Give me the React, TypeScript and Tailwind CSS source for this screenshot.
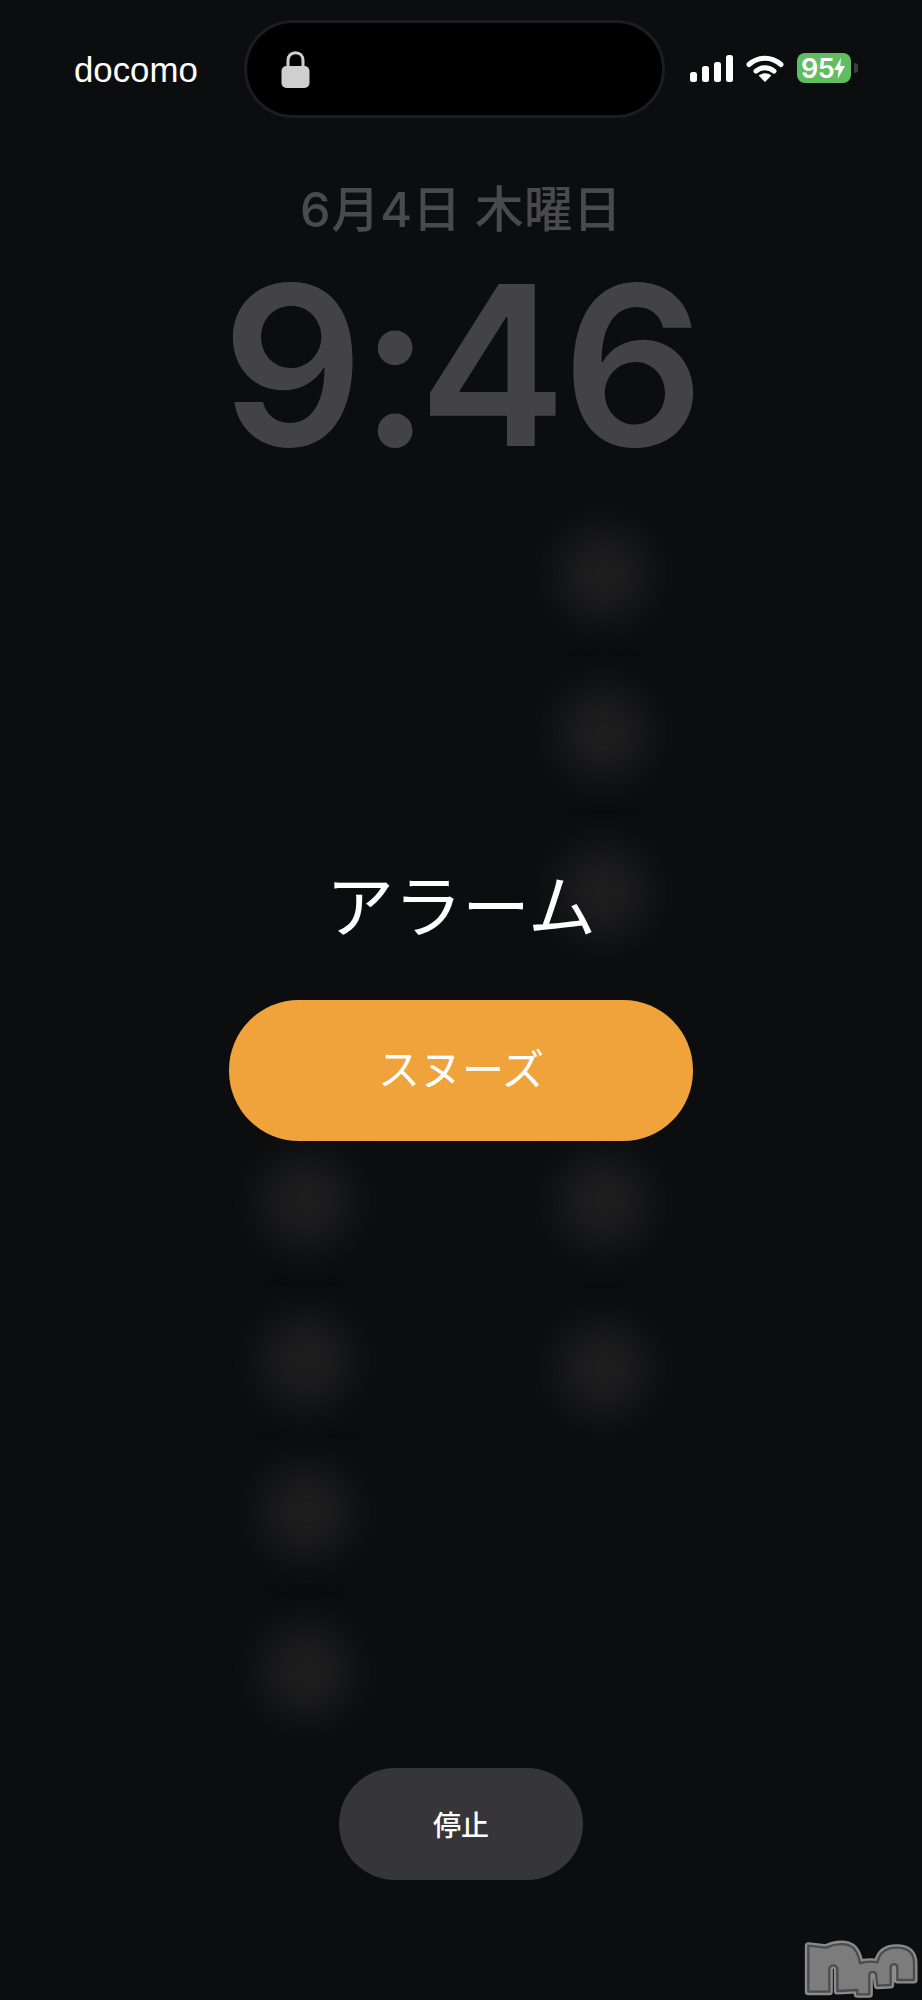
const cjk = { fontFamily: '"Noto Sans CJK JP", sans-serif' };

function Ghost({ on = true, extra = "" }: { on?: boolean; extra?: string }) {
  if (!on) return <div className="h-[90px] w-[90px]" />;
  return <div className={`h-[90px] w-[90px] rounded-full bg-[#1e1e1f] blur-[18px] ${extra}`} />;
}

function Signal() {
  return (
    <svg width="44" height="28" viewBox="0 0 44 28" className="block" aria-hidden="true">
      <rect x="1" y="17" width="7" height="10" rx="2.5" fill="#fff" />
      <rect x="13" y="11" width="7" height="16" rx="2.5" fill="#fff" />
      <rect x="25" y="7" width="7" height="20" rx="2.5" fill="#fff" />
      <rect x="37" y="0" width="7" height="27" rx="2.5" fill="#fff" />
    </svg>
  );
}

function Wifi() {
  return (
    <svg width="38" height="27" viewBox="0 0 38 27" className="block" aria-hidden="true">
      <path d="M3 9.5C12.5 1.2 25.5 1.2 35 9.5" fill="none" stroke="#fff" strokeWidth="5" strokeLinecap="round" />
      <path d="M10 16.2C15.4 11.6 22.6 11.6 28 16.2" fill="none" stroke="#fff" strokeWidth="5" strokeLinecap="round" />
      <path d="M19 27L12.6 20.6C16.4 17.6 21.6 17.6 25.4 20.6Z" fill="#fff" />
    </svg>
  );
}

function Lock() {
  return (
    <svg width="29" height="37" viewBox="0 0 29 37" className="block" aria-hidden="true">
      <path d="M7 17V9.5C7 4.8 10 1.8 14.5 1.8S22 4.8 22 9.5V17" fill="none" stroke="#cfcfcf" strokeWidth="3" />
      <rect x="0.5" y="15" width="28" height="22" rx="5" fill="#cfcfcf" />
    </svg>
  );
}

function Watermark() {
  const d =
    "M25 32L78 38C95 30 120 24 145 30C165 36 175 55 180 85C195 78 225 80 232 82C238 55 255 38 290 38C325 38 342 55 342 85L342 135L292 135L292 95C288 85 276 85 272 95L272 150L232 152L228 118C224 108 212 108 208 118L208 178L172 178L172 165L112 168L112 100C108 88 92 88 88 100L88 170L25 170Z";
  return (
    <svg width="122" height="65" viewBox="0 0 366 195" className="block" aria-hidden="true">
      <path d={d} fill="#7c7c7c" stroke="#8c8c8c" strokeWidth="21" strokeLinejoin="round" />
      <path d={d} fill="#7c7c7c" stroke="#4c4c4c" strokeWidth="7" strokeLinejoin="round" />
    </svg>
  );
}

export default function App() {
  return (
    <div
      className="relative h-[2000px] w-[922px] overflow-hidden bg-[#0c0d0f] text-white"
      style={{ fontFamily: '"Inter", "Noto Sans CJK JP", sans-serif' }}
    >
      {/* blurred notification ghosts behind the alarm */}
      <div className="absolute left-[261px] top-[529px] flex w-[387px] justify-between">
        <div className="flex flex-col gap-[69px] pt-[628px]">
          <Ghost />
          <Ghost />
          <Ghost extra="mt-[-8px]" />
          <Ghost />
        </div>
        <div className="flex flex-col gap-[69px]">
          <Ghost />
          <Ghost />
          <Ghost />
          <Ghost on={false} />
          <Ghost extra="mt-[-8px]" />
          <Ghost extra="mt-[8px]" />
        </div>
      </div>

      <div className="relative flex flex-col items-center">
        {/* status bar */}
        <header className="flex h-[118px] w-full items-start pt-[20px]">
          <div
            className="ml-[74px] mt-[30px] w-[170px] text-[34.8px] leading-[40px]"
            style={{ fontFamily: '"Liberation Sans", sans-serif' }}
          >
            docomo
          </div>
          <div className="flex h-[98px] w-[421px] items-center rounded-[49px] border-[3px] border-[#1d1d1f] bg-black pl-[34px]">
            <Lock />
          </div>
          <div className="ml-[24px] flex items-start pt-[35px]">
            <Signal />
            <div className="ml-[13px]">
              <Wifi />
            </div>
            <div className="ml-[13px] mt-[-2px] flex h-[30px] w-[54px] items-center rounded-[8px] bg-[#62bd62] pl-[4px] text-[27px] font-semibold leading-none tracking-[-0.5px]">
              95
              <svg width="11" height="21" viewBox="0 0 11 21" className="shrink-0" aria-hidden="true">
                <path d="M7 0L0 12H4.6L3.6 21L11 8H6.2Z" fill="#fff" />
              </svg>
            </div>
            <div className="ml-[3px] mt-[8px] h-[10px] w-[4px] rounded-r-[3px] bg-[#3c3c3e]" />
          </div>
        </header>

        {/* lock screen clock */}
        <div className="mt-[62px] text-[48.5px] font-medium leading-[60px] tracking-[0.5px] text-[#4a4a4d]">
          6月4日 木曜日
        </div>
        <div className="mt-[13px] text-[222px] font-semibold leading-[226px] tracking-[-4px] text-[#434347]">
          9<span className="tracking-[-12px]">:</span>46
        </div>

        {/* alarm */}
        <div className="mt-[380px] text-[68px] leading-[88px]" style={cjk}>
          アラーム
        </div>
        <button
          className="mt-[53px] flex h-[141px] w-[464px] items-center justify-center rounded-[70px] bg-[#f0a33a] pb-[8px] text-[42px] text-white"
          style={cjk}
        >
          スヌーズ
        </button>
        <button
          className="mt-[627px] flex h-[112px] w-[244px] items-center justify-center rounded-[56px] bg-[#363638] text-[28px] font-medium text-white"
          style={cjk}
        >
          停止
        </button>
      </div>

      <div className="absolute left-[800px] top-[1935px]">
        <Watermark />
      </div>
    </div>
  );
}
